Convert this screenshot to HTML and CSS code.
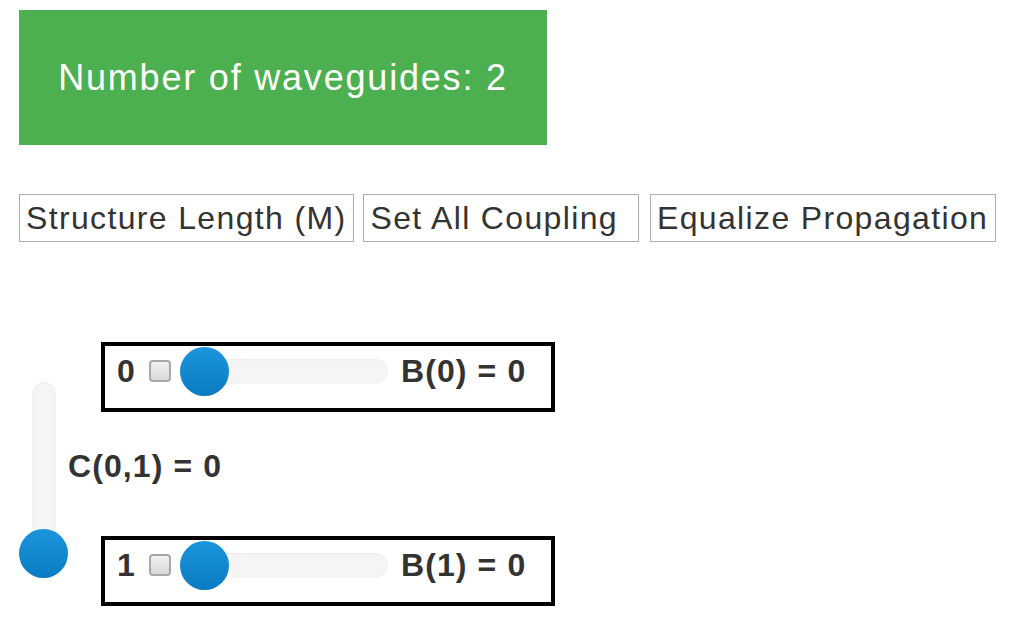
FILE: index.html
```html
<!DOCTYPE html>
<html>
<head>
<meta charset="utf-8">
<link rel="stylesheet" href="styles.css">
</head>
<body>
<div class="page">
  <div class="count">Number of waveguides: 2</div>
  <div class="actions">
    <button class="btn">Structure Length (M)</button>
    <button class="btn btn-wide">Set All Coupling</button>
    <button class="btn">Equalize Propagation</button>
  </div>
  <div class="guides">
    <div class="vslider">
      <div class="vtrack"></div>
      <div class="thumb"></div>
    </div>
    <div class="guide">
      <span class="idx">0</span>
      <span class="check"></span>
      <div class="hslider"><div class="htrack"></div><div class="thumb hthumb"></div></div>
      <span class="beta">B(0) = 0</span>
    </div>
    <div class="coupling">C(0,1) = 0</div>
    <div class="guide">
      <span class="idx">1</span>
      <span class="check"></span>
      <div class="hslider"><div class="htrack"></div><div class="thumb hthumb"></div></div>
      <span class="beta">B(1) = 0</span>
    </div>
  </div>
</div>
</body>
</html>
```
FILE: styles.css
```css
html, body {
  margin: 0;
  padding: 0;
  background: #fff;
}
body {
  font-family: "Liberation Sans", Arial, sans-serif;
  color: #333;
}
.page {
  padding: 10px 0 0 19px;
}
.count {
  width: 528px;
  height: 135px;
  background: #4caf50;
  color: #fff;
  font-size: 36px;
  letter-spacing: 1.8px;
  display: flex;
  align-items: center;
  justify-content: center;
}
.actions {
  margin-top: 49px;
  display: flex;
  gap: 9px;
}
.btn {
  font-family: "Liberation Sans", Arial, sans-serif;
  font-size: 32px;
  letter-spacing: 1.35px;
  color: #333;
  background: #fff;
  border: 1px solid #adadad;
  border-radius: 0;
  height: 48px;
  line-height: 44px;
  padding: 0 7px 0 6px;
  margin: 0;
  box-sizing: border-box;
}
.btn-wide {
  padding-right: 20px;
  margin-right: 2px;
}
.guides {
  margin-top: 100px;
  display: grid;
  grid-template-columns: 49px auto;
  justify-content: start;
}
.vslider {
  grid-column: 1;
  grid-row: 1 / 4;
  margin-top: 40px;
  height: 196px;
  display: flex;
  flex-direction: column;
  align-items: center;
}
.vtrack {
  flex: 1;
  width: 24px;
  margin-bottom: -26px;
  background: #f5f5f5;
  border-radius: 12px;
  box-shadow: inset 0 1px 2px rgba(0,0,0,0.04);
}
.thumb {
  width: 49px;
  height: 49px;
  border-radius: 50%;
  background: linear-gradient(#1b95dc, #0a7bc2);
  flex: none;
}
.guide {
  grid-column: 2;
  margin-left: 33px;
  width: 454px;
  box-sizing: border-box;
  border: 4px solid #000;
  padding: 0 0 12px 12px;
  display: flex;
  align-items: center;
  height: 70px;
  font-weight: bold;
  font-size: 32px;
  letter-spacing: 1.1px;
}
.idx {
  width: 19px;
}
.check {
  width: 18px;
  height: 18px;
  margin-left: 13px;
  border: 2px solid #a8a8a8;
  border-radius: 4px;
  background: linear-gradient(#f2f2f2, #d8d8d8);
  flex: none;
}
.hslider {
  position: relative;
  width: 208px;
  height: 49px;
  margin-left: 9px;
  display: flex;
  align-items: center;
}
.htrack {
  flex: 1;
  height: 25px;
  background: #f5f5f5;
  border-radius: 13px;
  box-shadow: inset 0 1px 2px rgba(0,0,0,0.04);
}
.hthumb {
  position: absolute;
  left: 0;
  top: 0;
}
.beta {
  margin-left: 13px;
}
.coupling {
  grid-column: 2;
  height: 124px;
  box-sizing: border-box;
  padding-top: 36px;
  font-weight: bold;
  font-size: 32px;
  letter-spacing: 1.1px;
}
```
